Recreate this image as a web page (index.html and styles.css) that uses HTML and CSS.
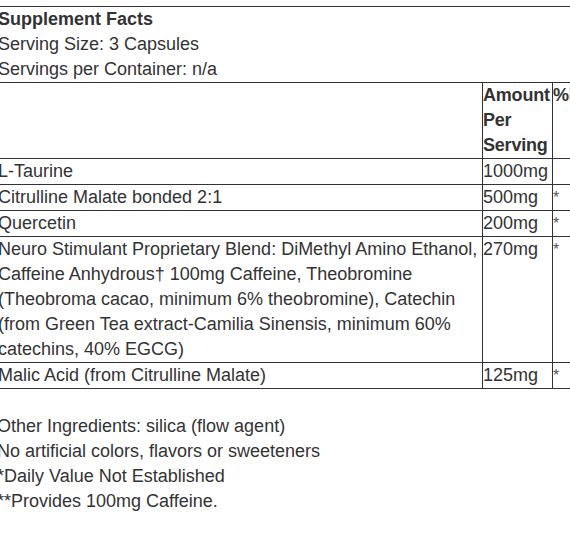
FILE: index.html
```html
<!DOCTYPE html>
<html lang="en">
<head>
    <meta charset="UTF-8">
    <meta name="viewport" content="width=device-width, initial-scale=1.0">
    <link rel="stylesheet" href="styles.css">
</head>
<body>
    <div class="facts-wrap">
        <table class="facts">
            <colgroup>
                <col class="col-name">
                <col class="col-amount">
                <col class="col-dv">
            </colgroup>
            <tr>
                <td colspan="3" class="facts-head">
                    <strong>Supplement Facts</strong><br>
                    Serving Size: 3 Capsules<br>
                    Servings per Container: n/a
                </td>
            </tr>
            <tr>
                <th></th>
                <th>Amount Per Serving</th>
                <th>%DV</th>
            </tr>
            <tr>
                <td>L-Taurine</td>
                <td>1000mg</td>
                <td></td>
            </tr>
            <tr>
                <td>Citrulline Malate bonded 2:1</td>
                <td>500mg</td>
                <td class="dv">*</td>
            </tr>
            <tr>
                <td>Quercetin</td>
                <td>200mg</td>
                <td class="dv">*</td>
            </tr>
            <tr>
                <td>Neuro Stimulant Proprietary Blend: DiMethyl Amino Ethanol, Caffeine Anhydrous&dagger; 100mg Caffeine, Theobromine (Theobroma cacao, minimum 6% theobromine), Catechin (from Green Tea extract-Camilia Sinensis, minimum 60% catechins, 40% EGCG)</td>
                <td>270mg</td>
                <td class="dv">*</td>
            </tr>
            <tr>
                <td>Malic Acid (from Citrulline Malate)</td>
                <td>125mg</td>
                <td class="dv">*</td>
            </tr>
        </table>

        <p class="notes">
            Other Ingredients: silica (flow agent)<br>
            No artificial colors, flavors or sweeteners<br>
            *Daily Value Not Established<br>
            **Provides 100mg Caffeine.
        </p>
    </div>
</body>
</html>
```

FILE: styles.css
```css
body {
    margin: 0;
    background-color: #fff;
    color: #333;
    font-family: "Liberation Sans", Arial, sans-serif;
    font-size: 18px;
    line-height: 25px;
    overflow: hidden;
}

.facts-wrap {
    margin-left: -3px;
    padding-top: 6px;
}

.facts {
    border-collapse: collapse;
    table-layout: fixed;
    width: 640px;
}

.col-name {
    width: 485px;
}

.col-amount {
    width: 70px;
}

.col-dv {
    width: 85px;
}

.facts td,
.facts th {
    border: 1px solid #333;
    padding: 0;
    text-align: left;
    vertical-align: top;
}

.facts th {
    font-weight: bold;
    letter-spacing: -0.2px;
}

.dv {
    font-size: 16px;
    color: #555;
}

.notes {
    margin: 25px 0 0;
}
```
